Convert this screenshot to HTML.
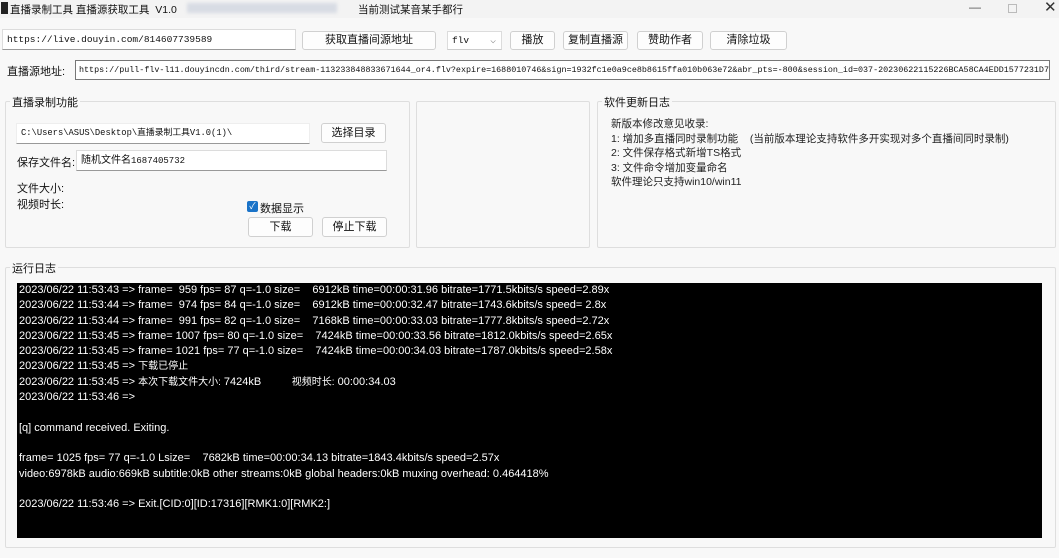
<!DOCTYPE html>
<html><head><meta charset="utf-8"><style>
*{box-sizing:border-box;margin:0;padding:0}
body{width:1059px;height:558px;background:#f8f8f8;font-family:"Liberation Sans","Noto Sans CJK SC",sans-serif;font-size:11px;color:#111;position:relative;overflow:hidden}
.a{position:absolute;white-space:nowrap}
.mono{font-family:"Liberation Mono","Noto Sans CJK SC",monospace;font-size:9.5px}
.btn{position:absolute;background:#fdfdfd;border:1px solid #d0d0d0;border-radius:3px;text-align:center;font-size:11px;line-height:17px}
.inp{position:absolute;background:#fff;border:1px solid #dcdcdc;border-bottom:1px solid #999;padding-left:4px;line-height:19px}
.grp{position:absolute;border:1px solid #dedede;border-radius:2px}
.gl{position:absolute;background:#f8f8f8;padding:0 2px;font-size:11px;top:-8px;left:4px}
.log{position:absolute;left:17px;top:283px;width:1025px;height:255px;background:#000;color:#fff;font-size:11px;line-height:15.3px;padding:0 0 0 2px;white-space:pre}
</style></head><body>
<div class="a" style="left:0;top:0;width:1059px;height:18px;background:#f3f3f3"></div>
<div class="a" style="left:1px;top:2px;width:7px;height:12px;background:#222"></div>
<div class="a" style="left:10px;top:2px;font-size:10.5px">直播录制工具 直播源获取工具&nbsp; V1.0</div>
<div class="a" style="left:187px;top:3px;width:150px;height:10px;background:#d8dce4;filter:blur(1.5px)"></div>
<div class="a" style="left:358px;top:2px;font-size:10.5px">当前测试某音某手都行</div>
<div class="a" style="left:969px;top:0px;font-size:12px;color:#555">—</div>
<div class="a" style="left:1008px;top:0px;width:9px;height:9px;border:1px solid #bbb;top:4px"></div>
<div class="a" style="left:1044px;top:-2px;font-size:15px;color:#333">✕</div>

<div class="inp mono" style="left:2px;top:29px;width:294px;height:21px">https://live.douyin.com/814607739589</div>
<div class="btn" style="left:302px;top:31px;width:134px;height:19px">获取直播间源地址</div>
<div class="inp mono" style="left:447px;top:31px;width:55px;height:19px;line-height:17px;border-bottom:1px solid #ccc">flv<span style="position:absolute;right:5px;color:#888">⌵</span></div>
<div class="btn" style="left:510px;top:31px;width:45px;height:19px">播放</div>
<div class="btn" style="left:563px;top:31px;width:65px;height:19px">复制直播源</div>
<div class="btn" style="left:637px;top:31px;width:66px;height:19px">赞助作者</div>
<div class="btn" style="left:710px;top:31px;width:77px;height:19px">清除垃圾</div>

<div class="a" style="left:7px;top:63px;font-size:11px">直播源地址:</div>
<div class="a mono" style="left:75px;top:60px;width:975px;height:20px;background:#fff;border:1px solid #777;padding-left:3px;line-height:18px;overflow:hidden;font-size:8.4px">https://pull-flv-l11.douyincdn.com/third/stream-113233848833671644_or4.flv?expire=1688010746&amp;sign=1932fc1e0a9ce8b8615ffa010b063e72&amp;abr_pts=-800&amp;session_id=037-20230622115226BCA58CA4EDD1577231D7</div>

<div class="grp" style="left:5px;top:101px;width:405px;height:147px"><div class="gl">直播录制功能</div></div>
<div class="inp mono" style="left:16px;top:123px;width:294px;height:21px;border-color:#eee;border-bottom-color:#999;font-size:8.8px">C:\Users\ASUS\Desktop\直播录制工具V1.0(1)\</div>
<div class="btn" style="left:321px;top:123px;width:65px;height:20px;line-height:18px">选择目录</div>
<div class="a" style="left:17px;top:154px">保存文件名:</div>
<div class="inp" style="left:76px;top:150px;width:311px;height:21px;font-size:10px">随机文件名<span class="mono" style="font-size:9px">1687405732</span></div>
<div class="a" style="left:17px;top:180px">文件大小:</div>
<div class="a" style="left:17px;top:196px">视频时长:</div>
<div class="a" style="left:247px;top:201px;width:11px;height:11px;background:#1a73c8;border-radius:2px;color:#fff;font-size:9px;line-height:11px;text-align:center">✓</div>
<div class="a" style="left:260px;top:200px">数据显示</div>
<div class="btn" style="left:248px;top:217px;width:65px;height:20px;line-height:18px">下载</div>
<div class="btn" style="left:322px;top:217px;width:65px;height:20px;line-height:18px">停止下载</div>

<div class="grp" style="left:416px;top:101px;width:174px;height:147px"></div>
<div class="grp" style="left:597px;top:101px;width:459px;height:147px"><div class="gl">软件更新日志</div></div>
<div class="a" style="left:611px;top:117px;line-height:14.5px;font-size:10.5px;color:#222">新版本修改意见收录:<br>1: 增加多直播同时录制功能&nbsp;&nbsp;&nbsp; (当前版本理论支持软件多开实现对多个直播间同时录制)<br>2: 文件保存格式新增TS格式<br>3: 文件命令增加变量命名<br>软件理论只支持win10/win11</div>

<div class="grp" style="left:5px;top:267px;width:1051px;height:281px"><div class="gl">运行日志</div></div>
<div class="log">2023/06/22 11:53:43 => frame=  959 fps= 87 q=-1.0 size=    6912kB time=00:00:31.96 bitrate=1771.5kbits/s speed=2.89x
2023/06/22 11:53:44 => frame=  974 fps= 84 q=-1.0 size=    6912kB time=00:00:32.47 bitrate=1743.6kbits/s speed= 2.8x
2023/06/22 11:53:44 => frame=  991 fps= 82 q=-1.0 size=    7168kB time=00:00:33.03 bitrate=1777.8kbits/s speed=2.72x
2023/06/22 11:53:45 => frame= 1007 fps= 80 q=-1.0 size=    7424kB time=00:00:33.56 bitrate=1812.0kbits/s speed=2.65x
2023/06/22 11:53:45 => frame= 1021 fps= 77 q=-1.0 size=    7424kB time=00:00:34.03 bitrate=1787.0kbits/s speed=2.58x
2023/06/22 11:53:45 => <span style="font-size:10px">下载已停止</span>
2023/06/22 11:53:45 => <span style="font-size:10px">本次下载文件大小:</span> 7424kB          <span style="font-size:10px">视频时长:</span> 00:00:34.03
2023/06/22 11:53:46 =>

[q] command received. Exiting.

frame= 1025 fps= 77 q=-1.0 Lsize=    7682kB time=00:00:34.13 bitrate=1843.4kbits/s speed=2.57x
video:6978kB audio:669kB subtitle:0kB other streams:0kB global headers:0kB muxing overhead: 0.464418%

2023/06/22 11:53:46 => Exit.[CID:0][ID:17316][RMK1:0][RMK2:]</div>
</body></html>
